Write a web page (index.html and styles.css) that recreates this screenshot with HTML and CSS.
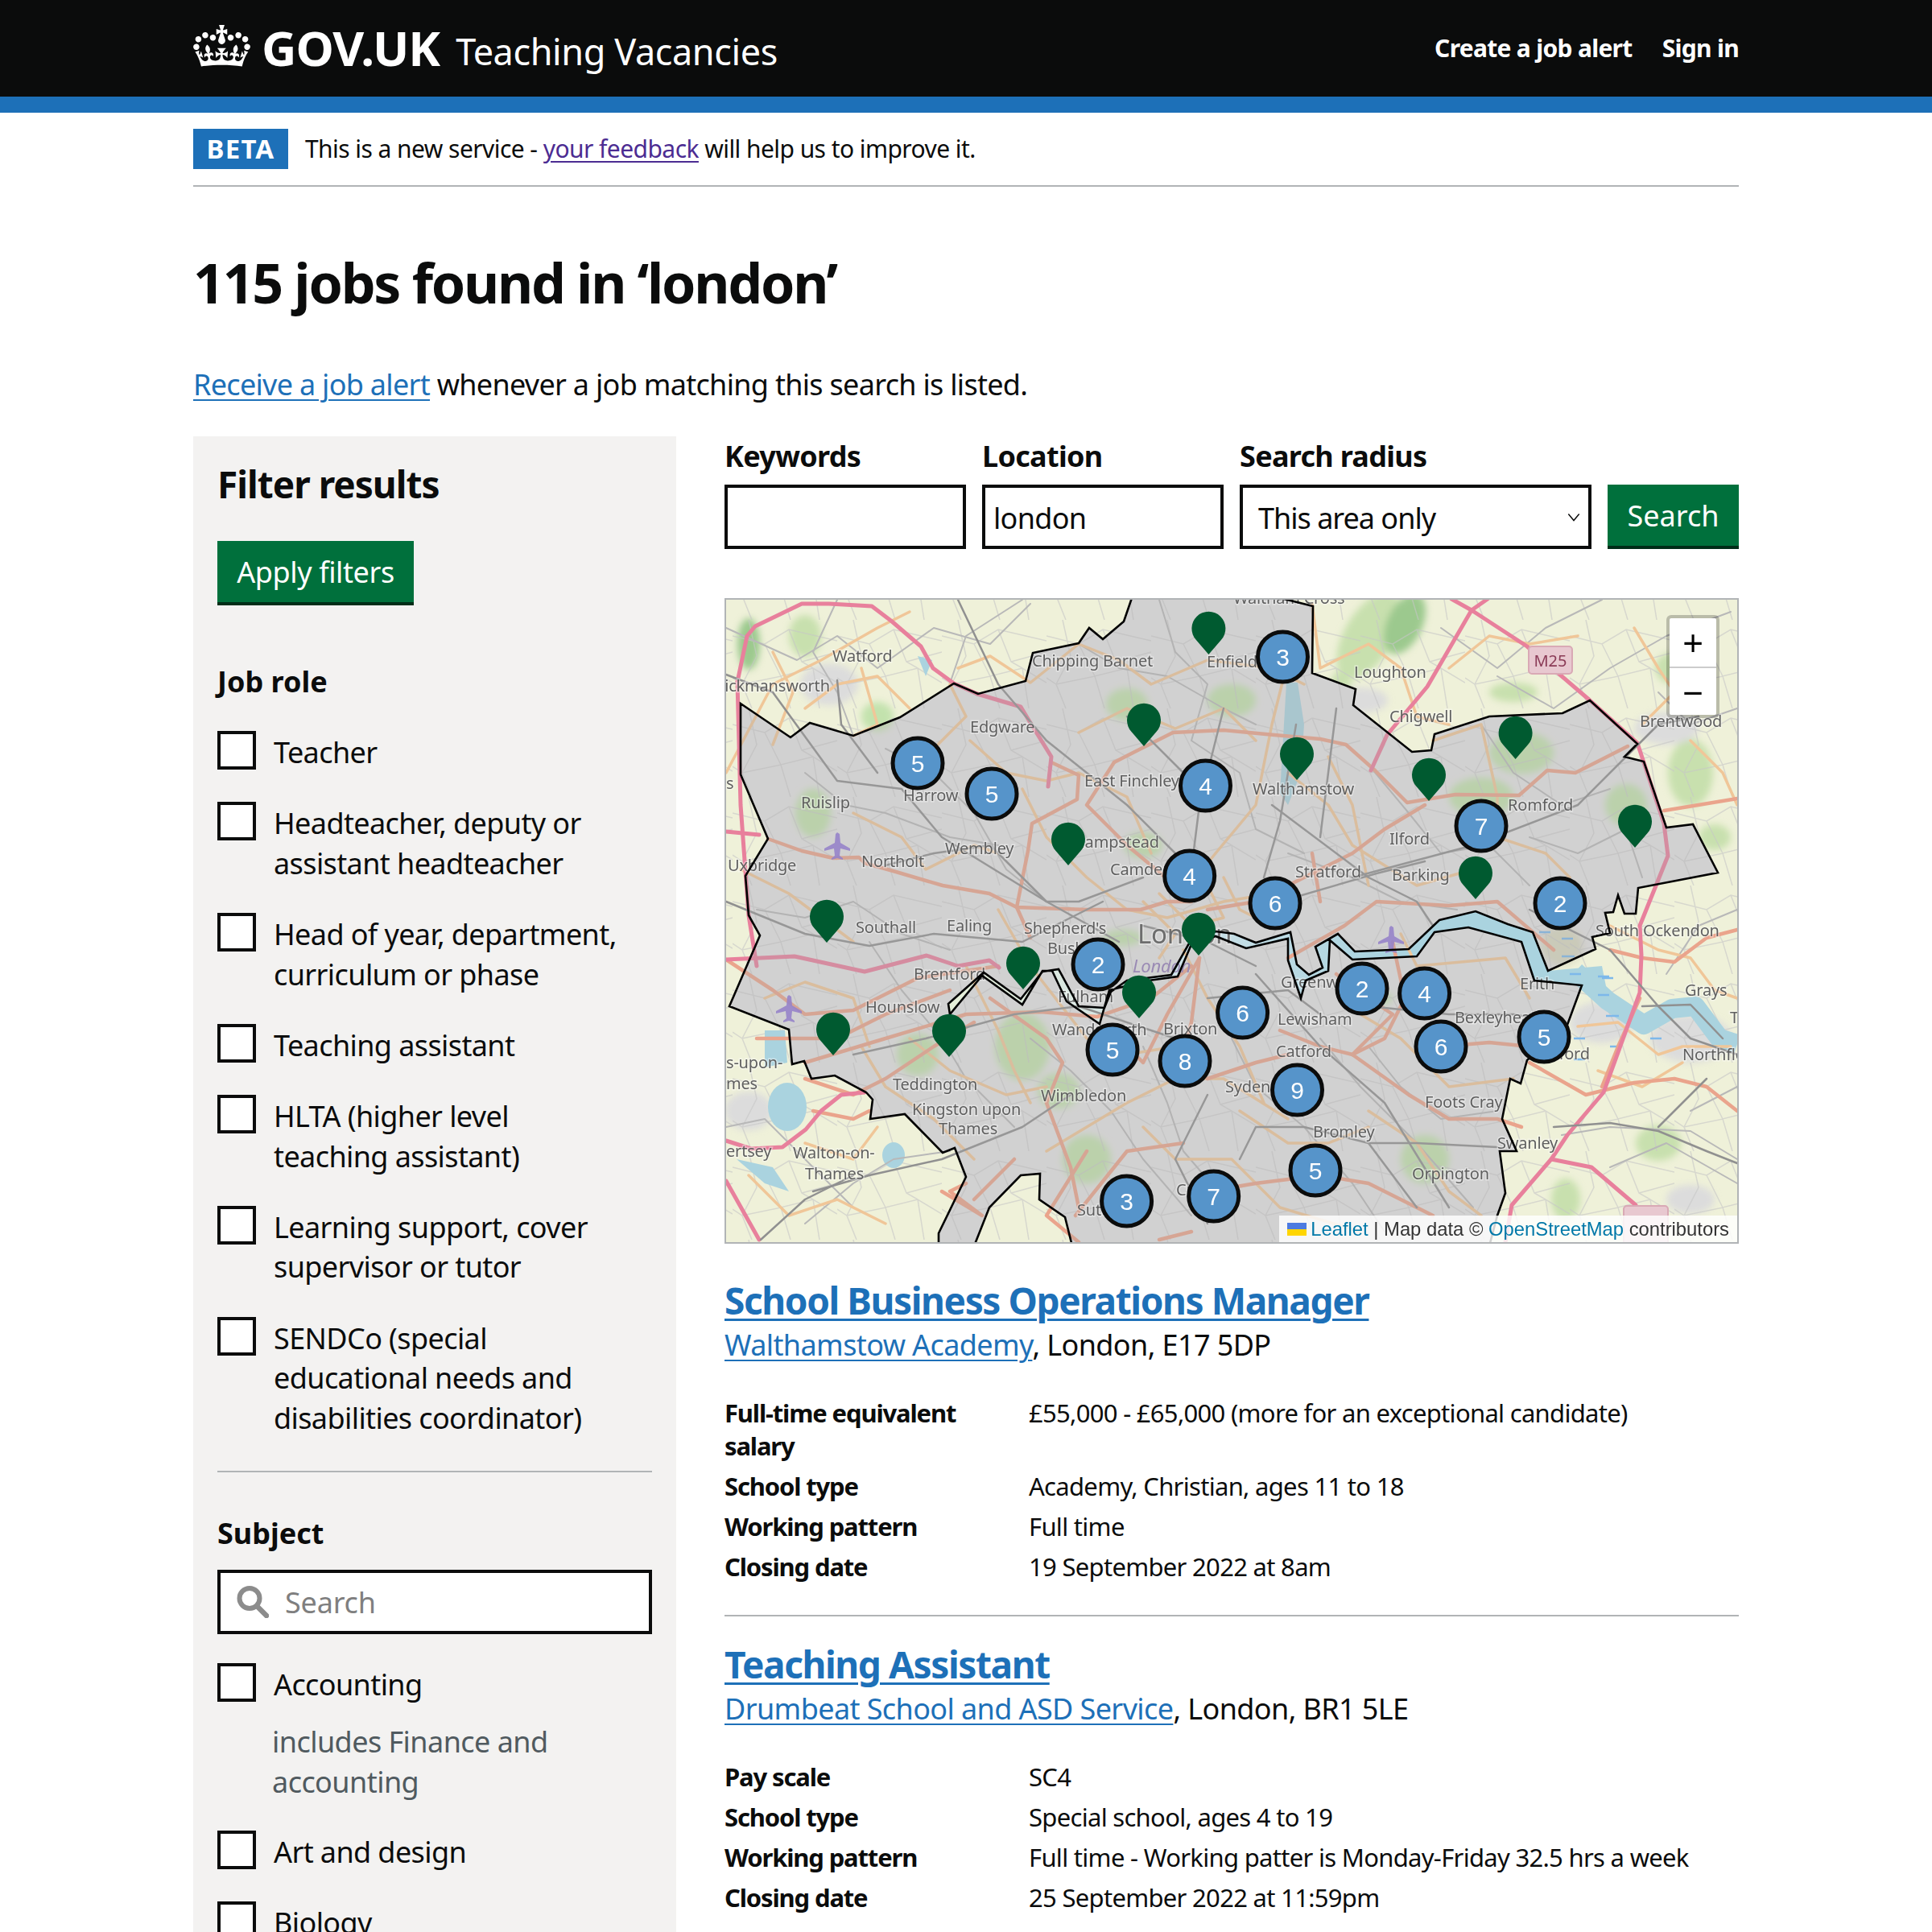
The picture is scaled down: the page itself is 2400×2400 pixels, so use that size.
FILE: index.html
```html
<!DOCTYPE html>
<html lang="en">
<head>
<meta charset="utf-8">
<title>Teaching Vacancies</title>
<link rel="stylesheet" href="styles.css">
</head>
<body>
<div class="page">
<header class="site-header">
  <div class="container header-row">
    <a class="logo">
      <svg class="crown" viewBox="0 0 132 97" aria-hidden="true"><path fill="#fff" fill-rule="evenodd" d="M25 30.2c3.5 1.5 7.7-.2 9.1-3.7 1.5-3.6-.2-7.8-3.9-9.2-3.6-1.4-7.6.3-9.1 3.9-1.4 3.5.3 7.5 3.9 9zM9 39.5c3.6 1.5 7.8-.2 9.2-3.7 1.5-3.6-.2-7.8-3.9-9.1-3.6-1.5-7.6.2-9.1 3.8-1.4 3.5.3 7.5 3.8 9zM4.4 57.2c3.5 1.5 7.7-.2 9.1-3.8 1.5-3.6-.2-7.7-3.9-9.1-3.5-1.5-7.6.3-9.1 3.8-1.4 3.5.3 7.6 3.9 9.1zm38.3-21.4c3.5 1.5 7.7-.2 9.1-3.8 1.5-3.6-.2-7.7-3.9-9.1-3.6-1.5-7.6.3-9.1 3.8-1.3 3.6.4 7.7 3.9 9.1zm64.4-5.6c-3.6 1.5-7.8-.2-9.1-3.7-1.5-3.6.2-7.8 3.8-9.2 3.6-1.4 7.7.3 9.2 3.9 1.3 3.5-.4 7.5-3.9 9zm15.9 9.3c-3.6 1.5-7.7-.2-9.1-3.7-1.5-3.6.2-7.8 3.7-9.1 3.6-1.5 7.7.2 9.2 3.8 1.5 3.5-.3 7.5-3.8 9zm4.7 17.7c-3.6 1.5-7.8-.2-9.2-3.8-1.5-3.6.2-7.7 3.9-9.1 3.6-1.5 7.7.3 9.2 3.8 1.3 3.5-.4 7.6-3.9 9.1zM89.3 35.8c-3.6 1.5-7.8-.2-9.2-3.8-1.4-3.6.2-7.7 3.9-9.1 3.6-1.5 7.7.3 9.2 3.8 1.4 3.6-.3 7.7-3.9 9.1zM69.7 17.7l8.9 4.7V9.3l-8.9 2.8c-.2-.3-.5-.6-.9-.9L72.4 0H59.6l3.5 11.2c-.3.3-.6.5-.9.9l-8.8-2.8v13.1l8.8-4.7c.3.3.6.7.9.9l-5 15.4v.1c-.2.8-.4 1.6-.4 2.4 0 4.1 3.1 7.5 7 8.1h.2c.3 0 .7.1 1 .1.4 0 .7 0 1-.1h.2c4-.6 7.1-4.1 7.1-8.1 0-.8-.1-1.7-.4-2.4V34l-5.1-15.4c.4-.2.7-.6 1-.9zM66 92.8c16.9 0 32.8 1.1 47.1 3.2 4-16.9 8.9-26.7 14-33.5l-9.6-3.4c1 4.9 1.1 7.2 0 10.2-1.5-1.4-3-4.3-4.2-8.7L108.6 76c2.8-2 5-3.2 7.5-3.3-4.4 9.4-10 11.9-13.6 11.2-4.3-.8-6.3-4.6-5.6-7.9 1-4.7 5.7-5.9 8-.5 4.3-8.7-3-11.4-7.6-8.8 7.1-7.2 7.9-13.5 2.1-21.1-8 6.1-8.1 12.3-4.5 20.8-4.7-5.4-12.1-2.5-9.5 6.2 3.4-5.2 7.9-2 7.2 3.1-.6 4.3-6.4 7.8-13.5 7.2-10.3-.9-10.9-8-11.2-13.8 2.5-.5 7.1 1.8 11 7.3L80.2 60c-4.1 4.4-8 5.3-12.3 5.4 1.4-4.4 8-11.6 8-11.6H55.5s6.4 7.2 7.9 11.6c-4.2-.1-8-1-12.3-5.4l1.4 16.4c3.9-5.5 8.5-7.7 10.9-7.3-.3 5.8-.9 12.8-11.1 13.8-7.2.6-12.9-2.9-13.5-7.2-.7-5 3.8-8.3 7.1-3.1 2.7-8.7-4.6-11.6-9.4-6.2 3.7-8.5 3.6-14.7-4.6-20.8-5.8 7.6-5 13.9 2.2 21.1-4.7-2.6-11.9.1-7.7 8.8 2.3-5.5 7.1-4.2 8.1.5.7 3.3-1.3 7.1-5.7 7.9-3.5.7-9-1.8-13.5-11.2 2.5.1 4.7 1.3 7.5 3.3l-4.7-15.4c-1.2 4.4-2.7 7.2-4.3 8.7-1.1-3-.9-5.3 0-10.2l-9.5 3.4c5 6.9 9.9 16.7 14 33.5 14.8-2.1 30.8-3.2 47.7-3.2z"/></svg>
      <span class="logo-govuk">GOV.UK</span>
      <span class="logo-service">Teaching Vacancies</span>
    </a>
    <nav class="header-nav"><a>Create a job alert</a><a>Sign in</a></nav>
  </div>
</header>

<div class="container">
  <div class="beta">
    <strong class="beta-tag">BETA</strong>
    <span class="beta-text">This is a new service - <a class="visited">your feedback</a> will help us to improve it.</span>
  </div>

  <h1 class="title">115 jobs found in ‘london’</h1>
  <p class="lead"><a class="link">Receive a job alert</a> whenever a job matching this search is listed.</p>

  <div class="columns">
    <aside class="filters">
      <h2 class="filters-title">Filter results</h2>
      <button class="btn btn-apply">Apply filters</button>

      <h3 class="group-title first">Job role</h3>
      <ul class="checks">
        <li class="check"><span class="box"></span><span class="check-label">Teacher</span></li>
        <li class="check"><span class="box"></span><span class="check-label">Headteacher, deputy or<br>assistant headteacher</span></li>
        <li class="check"><span class="box"></span><span class="check-label">Head of year, department,<br>curriculum or phase</span></li>
        <li class="check"><span class="box"></span><span class="check-label">Teaching assistant</span></li>
        <li class="check"><span class="box"></span><span class="check-label">HLTA (higher level<br>teaching assistant)</span></li>
        <li class="check"><span class="box"></span><span class="check-label">Learning support, cover<br>supervisor or tutor</span></li>
        <li class="check"><span class="box"></span><span class="check-label">SENDCo (special<br>educational needs and<br>disabilities coordinator)</span></li>
      </ul>
      <hr class="filter-rule">

      <h3 class="group-title subject">Subject</h3>
      <div class="subject-search">
        <svg class="search-icon" viewBox="0 0 40 40" aria-hidden="true"><circle cx="16" cy="15.5" r="12.5" fill="none" stroke="#8c8c8c" stroke-width="6"/><path d="M25 25l12 12" stroke="#8c8c8c" stroke-width="6.5" stroke-linecap="round"/></svg>
        <span class="search-placeholder">Search</span>
      </div>
      <ul class="checks">
        <li class="check-block">
          <div class="check"><span class="box"></span><span class="check-label">Accounting</span></div>
          <p class="hint">includes Finance and<br>accounting</p>
        </li>
        <li class="check"><span class="box"></span><span class="check-label">Art and design</span></li>
        <li class="check"><span class="box"></span><span class="check-label">Biology</span></li>
      </ul>
    </aside>

    <main class="results">
      <form class="search-form">
        <div class="field field-kw"><label class="field-label">Keywords</label><div class="input"></div></div>
        <div class="field field-loc"><label class="field-label">Location</label><div class="input">london</div></div>
        <div class="field field-rad"><label class="field-label">Search radius</label>
          <div class="input select">This area only<svg class="chev" viewBox="0 0 12 8" aria-hidden="true"><path d="M1 1l5 6 5-6" fill="none" stroke="#0b0c0c" stroke-width="1.1"/></svg></div>
        </div>
        <button class="btn btn-search" type="button">Search</button>
      </form>

      <div class="map">
        <svg class="map-svg" viewBox="902 745 1256 798" aria-label="Map of London">
          <defs>
            <filter id="soft" x="-2%" y="-2%" width="104%" height="104%"><feGaussianBlur stdDeviation="0.7"/></filter>
            <filter id="softer" x="-20%" y="-20%" width="140%" height="140%"><feGaussianBlur stdDeviation="4"/></filter>
            <linearGradient id="thames" gradientUnits="userSpaceOnUse" x1="1180" y1="0" x2="1720" y2="0">
              <stop offset="0" stop-color="#e6efd8"/><stop offset=".5" stop-color="#cfe2e8"/><stop offset="1" stop-color="#aad3df"/>
            </linearGradient>
            <pattern id="streets" width="130" height="110" patternUnits="userSpaceOnUse">
              <path class="street" d="M0 20L40 30L70 12L130 26M20 0L30 45L12 80L24 110M40 30L60 70L100 60L130 78M70 12L86 52L100 60L108 110M0 72L12 80L60 70L72 110M86 52L130 40"/>
            </pattern>
            <path id="gla" d="M920 874L982 916L1006 898L1060 914L1118 891L1185 849L1215 862L1274 846L1283 811L1340 799L1353 780L1370 794L1396 772L1407 740L1579 740L1631 753L1630 836L1684 856L1681 876L1754 934L1778 932L1782 912L1850 890L1941 886L1975 870L2034 924L2018 940L2042 946L2070 1028L2103 1024L2134 1084L2035 1103L2032 1135L2018 1135L2010 1112L2004 1133L1994 1134L2000 1159L1978 1164L1982 1179L1923 1206L1904 1158L1873 1148L1833 1132L1788 1143L1750 1179L1683 1182L1662 1160L1634 1176L1643 1202L1626 1211L1611 1198L1603 1158L1560 1171L1533 1160L1510 1157L1477 1172L1455 1211L1400 1218L1380 1232L1372 1252L1340 1250L1315 1204L1295 1207L1268 1241L1222 1208L1178 1247L1180 1260L1220 1212L1270 1248L1295 1206L1307 1206L1325 1244L1366 1272L1378 1230L1427 1218L1463 1213L1480 1173L1510 1163L1548 1178L1600 1166L1600 1193L1616 1240L1622 1218L1650 1206L1652 1168L1680 1192L1760 1188L1782 1158L1824 1152L1890 1170L1906 1218L1965 1224L1947 1273L1897 1317L1889 1346L1876 1340L1866 1390L1884 1430L1863 1430L1870 1482L1860 1510L1850 1548L1332 1548L1323 1512L1291 1490L1292 1458L1268 1460L1229 1500L1210 1548L1166 1548L1166 1532L1200 1462L1186 1426L1171 1432L1124 1384L1081 1390L1084 1366L1076 1357L1037 1336L1008 1340L999 1318L984 1322L980 1279L906 1250L944 1162L930 1137L926 1088L954 1042L920 962Z"/>
          </defs>

          <g filter="url(#soft)">
            <rect class="m-base" x="902" y="745" width="1256" height="798"/>
            <g filter="url(#softer)">
              <ellipse class="m-wood" cx="1700" cy="790" rx="30" ry="60" transform="rotate(30 1700 790)"/>
              <ellipse class="m-wood2" cx="1745" cy="775" rx="22" ry="40" transform="rotate(25 1745 775)"/>
              <ellipse class="m-wood" cx="1665" cy="860" rx="14" ry="26"/>
              <ellipse class="m-wood" cx="1000" cy="790" rx="20" ry="26"/>
              <ellipse class="m-wood2" cx="930" cy="800" rx="14" ry="32"/>
              <ellipse class="m-wood" cx="2100" cy="960" rx="28" ry="42"/>
              <ellipse class="m-wood" cx="2130" cy="1040" rx="20" ry="16"/>
              <ellipse class="m-wood" cx="2080" cy="830" rx="24" ry="20"/>
              <ellipse class="m-wood" cx="1880" cy="860" rx="30" ry="12"/>
              <ellipse class="m-wood" cx="1945" cy="1490" rx="18" ry="26"/>
              <ellipse class="m-wood" cx="2060" cy="1420" rx="28" ry="22"/>
              <ellipse class="m-urban" cx="1030" cy="850" rx="36" ry="26"/>
              <ellipse class="m-urban" cx="1690" cy="870" rx="34" ry="16"/>
              <ellipse class="m-urban" cx="1990" cy="1270" rx="40" ry="26"/>
              <ellipse class="m-urban" cx="2100" cy="1290" rx="50" ry="30"/>
              <ellipse class="m-urban" cx="2070" cy="905" rx="40" ry="20"/>
              <ellipse class="m-urban" cx="930" cy="1380" rx="30" ry="24"/>
              <ellipse class="m-urban" cx="2100" cy="1490" rx="30" ry="18"/>
            </g>
            <use href="#gla" class="m-urbanfill"/>
            <g filter="url(#softer)">
              <ellipse class="m-park" cx="1270" cy="1300" rx="34" ry="42"/>
              <ellipse class="m-park" cx="1315" cy="1355" rx="26" ry="22"/>
              <ellipse class="m-park" cx="1420" cy="1050" rx="24" ry="16"/>
              <ellipse class="m-park" cx="1395" cy="1165" rx="24" ry="10"/>
              <ellipse class="m-park" cx="1400" cy="875" rx="26" ry="20"/>
              <ellipse class="m-park" cx="1530" cy="870" rx="30" ry="20"/>
              <ellipse class="m-park" cx="1010" cy="1010" rx="22" ry="30"/>
              <ellipse class="m-park" cx="1090" cy="890" rx="20" ry="18"/>
              <ellipse class="m-park" cx="1840" cy="990" rx="40" ry="24"/>
              <ellipse class="m-park" cx="1890" cy="935" rx="40" ry="26"/>
              <ellipse class="m-park" cx="2020" cy="1000" rx="26" ry="26"/>
              <ellipse class="m-park" cx="1770" cy="1440" rx="30" ry="30"/>
              <ellipse class="m-park" cx="1350" cy="1440" rx="30" ry="30"/>
              <ellipse class="m-park" cx="1140" cy="1310" rx="26" ry="26"/>
              <ellipse class="m-park" cx="1700" cy="1240" rx="30" ry="10"/>
              <ellipse class="m-marsh" cx="1940" cy="1175" rx="26" ry="24"/>
            </g>
            <rect class="m-streets" x="902" y="745" width="1256" height="798" fill="url(#streets)"/>
            <g class="m-water">
              <path d="M1598 848L1612 848L1620 900L1616 960L1600 1000L1590 985Z"/>
              <path d="M1140 815L1158 820L1150 840Z"/>
              <path d="M950 1280L975 1280L978 1320L950 1326Z"/>
              <ellipse cx="978" cy="1375" rx="24" ry="30"/>
              <ellipse cx="1110" cy="1435" rx="14" ry="16"/>
              <path d="M915 1440L960 1450L980 1480L950 1470Z"/>
            </g>
            <path class="thames-outer" d="M1957 1207L1997 1243L2042 1273L2077 1253L2106 1250L2136 1290L2158 1297"/>
            <path class="thames-fill" d="M1178 1247L1222 1208L1268 1241L1295 1207L1315 1204L1340 1250L1372 1252L1380 1232L1400 1218L1455 1211L1477 1172L1510 1157L1533 1160L1560 1171L1603 1158L1611 1198L1626 1211L1643 1202L1634 1176L1662 1160L1683 1182L1750 1179L1788 1143L1833 1132L1873 1148L1904 1158L1923 1206L1990 1200L2000 1250L1965 1224L1906 1218L1890 1170L1824 1152L1782 1158L1760 1188L1680 1192L1652 1168L1650 1206L1622 1218L1616 1240L1600 1193L1600 1166L1548 1178L1510 1163L1480 1173L1463 1213L1427 1218L1378 1230L1366 1272L1325 1244L1307 1206L1295 1206L1270 1248L1220 1212L1180 1260Z"/>
            <path class="m-dash" d="M1912 1158h14M1940 1166h14M1940 1188h16M1950 1210h14M1985 1213h14M1985 1236h14M1995 1262h16M1955 1290h14M1955 1316h14M1990 1215h14M2000 1300h14M2050 1290h14"/>

            <g class="r-minor">
              <path d="M902 780L990 820L1040 790L1090 830L1160 780L1230 800L1280 750"/>
              <path d="M1060 914L1040 860L1010 810L1040 745"/>
              <path d="M1180 849L1200 790L1270 745"/>
              <path d="M1790 780L1860 830L1920 780L1990 745"/>
              <path d="M1860 840L1930 880L2000 830L2070 790L2150 760"/>
              <path d="M2060 860L2100 900L2158 880"/>
              <path d="M2000 1450L2070 1420L2158 1470"/>
              <path d="M1940 1410L2000 1400L2100 1405L2158 1440"/>
              <path d="M2100 1380L2158 1350"/>
              <path d="M2070 1210L2110 1150L2158 1130"/>
              <path d="M902 1400L950 1390L1000 1440L1060 1500"/>
              <path d="M1000 1520L1060 1470L1110 1440L1180 1430"/>
              <path d="M1440 745L1460 810L1500 850L1480 920L1540 960L1560 1030L1620 1060"/>
              <path d="M1340 800L1390 830L1450 840L1520 880L1560 900"/>
              <path d="M1100 930L1160 960L1210 1010L1250 1080L1300 1120"/>
              <path d="M1000 960L1050 1000L1100 1010L1180 1040L1240 1050"/>
              <path d="M940 1130L1000 1140L1060 1120L1120 1160L1180 1180"/>
              <path d="M1080 1170L1120 1230L1170 1290L1200 1340L1260 1400"/>
              <path d="M1280 1290L1330 1330L1380 1380L1420 1440L1480 1510"/>
              <path d="M1420 1300L1450 1370L1470 1430L1530 1500"/>
              <path d="M1530 1290L1560 1350L1620 1400L1680 1470L1720 1530"/>
              <path d="M1640 1290L1690 1350L1760 1420L1830 1500"/>
              <path d="M1700 1300L1740 1350L1790 1390L1860 1380"/>
              <path d="M1600 1060L1680 1090L1740 1120L1810 1130"/>
              <path d="M1700 950L1750 1010L1790 1060L1850 1050L1900 1100"/>
              <path d="M1900 1040L1960 1060L2020 1030L2040 1090"/>
              <path d="M1840 900L1880 960L1940 1000L2000 980"/>
            </g>
            <g class="r-tan">
              <path d="M902 960L960 850L1020 820L1090 780L1130 760"/>
              <path d="M1000 880L1040 850L1090 840L1130 880"/>
              <path d="M960 925L985 860L960 810"/>
              <path d="M1070 830L1090 900L1060 914"/>
              <path d="M1190 830L1230 815L1280 848L1340 800L1390 820L1430 850L1500 820L1580 830L1620 850"/>
              <path d="M1180 850L1200 890L1160 930L1125 950"/>
              <path d="M1205 920L1250 960L1300 970L1340 960L1400 990L1430 1060"/>
              <path d="M1060 1010L1120 1040L1150 1080L1210 1050L1240 1060"/>
              <path d="M1270 980L1300 1040L1350 1090L1400 1130L1450 1140L1520 1120L1580 1110"/>
              <path d="M1340 910L1400 880L1460 905L1520 880L1560 920"/>
              <path d="M1600 820L1580 900L1560 1000L1510 1060L1470 1110"/>
              <path d="M1600 960L1650 1000L1680 1050L1760 1100L1830 1080"/>
              <path d="M1650 940L1680 1000L1700 1100"/>
              <path d="M1630 750L1640 830L1700 800L1740 830L1760 890L1800 900"/>
              <path d="M1780 920L1840 900L1860 990L1860 1040L1920 1060L1950 1090"/>
              <path d="M1800 830L1850 790L1900 800L1960 790"/>
              <path d="M2030 780L2060 830L2080 860L2040 900"/>
              <path d="M2100 920L2140 960L2158 1000"/>
              <path d="M2000 1150L2060 1180L2100 1190L2130 1230L2158 1240"/>
              <path d="M1960 1275L2010 1270L2060 1310L2090 1300L2150 1300"/>
              <path d="M1985 1330L2040 1350L2090 1320"/>
              <path d="M1690 1260L1740 1290L1800 1350L1880 1340"/>
              <path d="M1740 1160L1760 1200L1870 1190L1900 1240"/>
              <path d="M1700 1380L1760 1420L1800 1480L1840 1510"/>
              <path d="M1540 1380L1600 1420L1650 1420L1700 1400"/>
              <path d="M1300 1430L1400 1370L1460 1340L1520 1340L1600 1390"/>
              <path d="M1130 1290L1180 1330L1250 1360L1300 1350"/>
              <path d="M1200 1200L1240 1280L1260 1330L1280 1370"/>
              <path d="M1070 1300L1100 1350L1160 1390L1210 1440"/>
              <path d="M950 1240L1000 1220L1060 1240L1080 1300"/>
              <path d="M920 1080L980 1110L1020 1140L1060 1170"/>
              <path d="M930 1460L980 1510L1040 1490L1100 1520"/>
              <path d="M1000 1420L1060 1440L1090 1400"/>
              <path d="M1420 1400L1460 1440L1530 1440L1590 1500L1690 1530"/>
              <path d="M1240 1130L1280 1200L1350 1290L1400 1310L1460 1300"/>
              <path d="M1470 1180L1500 1240L1540 1300L1570 1370"/>
              <path d="M1440 1110L1480 1150L1520 1140L1500 1100M1420 1120L1460 1160L1440 1190M1520 1090L1540 1130L1580 1150"/>
            </g>
            <g class="r-salmon">
              <path d="M954 1042L996 1057L1035 1066L1067 1065L1074 1072L1113 1083L1171 1100L1229 1110L1263 1127L1350 1130L1417 1130L1450 1120L1480 1120"/>
              <path d="M1384 947L1457 910L1520 907L1583 913L1640 918L1672 925L1708 957L1748 997L1808 987L1887 988L1922 957L1957 960L2022 927"/>
              <path d="M2067 1007L2158 992"/>
              <path d="M1306 947L1340 963L1338 993L1282 1023L1277 1057L1263 1127L1280 1165"/>
              <path d="M1384 947L1350 1000L1400 1050L1460 1100"/>
              <path d="M902 1192L960 1230L1000 1260L1060 1255L1140 1215L1240 1200"/>
              <path d="M940 1290L1040 1290L1100 1260L1180 1230"/>
              <path d="M1000 1320L1100 1290L1200 1260L1293 1257L1363 1263L1430 1240L1480 1200"/>
              <path d="M1230 1240L1300 1290L1320 1320L1300 1370L1330 1450L1340 1500"/>
              <path d="M1490 1190L1450 1260L1420 1320L1400 1300"/>
              <path d="M1490 1190L1480 1270L1460 1340"/>
              <path d="M1500 1130L1560 1120L1620 1090L1680 1060L1720 1030L1770 1000"/>
              <path d="M1600 1190L1670 1150L1710 1120L1800 1125L1860 1120L1930 1180"/>
              <path d="M1660 1210L1700 1240L1730 1260L1680 1310L1640 1300L1590 1280"/>
              <path d="M1730 1170L1745 1240L1720 1290L1680 1310"/>
              <path d="M1680 1310L1750 1360L1800 1390L1860 1390L1890 1400"/>
              <path d="M1790 1300L1850 1295L1900 1300"/>
              <path d="M1500 1480L1560 1470L1640 1460L1700 1470L1780 1510"/>
              <path d="M1336 1510L1400 1430L1470 1420"/>
              <path d="M1500 1340L1560 1320L1600 1310"/>
              <path d="M1900 1320L1970 1360L2030 1345L2080 1340L2120 1350L2158 1380"/>
              <path d="M2000 1180L2040 1190L2080 1195L2120 1165L2158 1155"/>
              <path d="M2037 1240L2010 1300L1990 1350"/>
              <path d="M1000 1340L1060 1360L1100 1340L1160 1300L1210 1270"/>
              <path d="M1080 1380L1060 1390L1010 1380"/>
              <path d="M1260 1440L1210 1490"/>
              <path d="M1200 1470L1180 1480L1220 1510L1170 1480"/>
              <path d="M1350 1430L1300 1510L1340 1543"/>
              <path d="M1480 1530L1440 1540M1630 1060L1640 1120"/>
            </g>
            <g class="r-pink">
              <path d="M916 847L928 790L938 778L996 750L1030 750L1083 753L1108 772L1144 803L1159 830L1185 849L1214 862"/>
              <path d="M1214 862L1268 878L1277 893L1306 940L1302 977"/>
              <path d="M1803 744L1828 758L1848 744M1828 758L1773 853L1723 913L1703 957"/>
              <path d="M1828 758L1897 803L1975 870L2034 923L2067 1023L2072 1063L2037 1150L2039 1187L2037 1233L1992 1357L1947 1410L1927 1440L1878 1497L1870 1543"/>
              <path d="M1927 1440L1977 1450L2032 1497"/>
              <path d="M902 1192L987 1188L1074 1207L1151 1187L1190 1200L1229 1193L1241 1202"/>
              <path d="M902 1033L943 1037"/>
              <path d="M902 1417L933 1427L972 1425L1001 1403L1020 1380L1045 1360L1074 1357"/>
              <path d="M902 1467L943 1540"/>
              <path d="M916 847L920 1000L930 1137L940 1200"/>
            </g>
            <g class="r-rail">
              <path d="M902 838L960 860L1040 970L1120 980L1170 1040L1300 1120L1390 1170"/>
              <path d="M1040 845L1045 900L1090 960"/>
              <path d="M1190 745L1240 850L1300 920L1400 1000L1470 1070"/>
              <path d="M1100 1075L1160 1060L1230 1050L1300 1120L1340 1120L1420 1090"/>
              <path d="M902 1120L1000 1160L1080 1175L1160 1160L1270 1170L1370 1120"/>
              <path d="M1400 890L1470 960L1490 985"/>
              <path d="M1520 880L1490 1000L1480 1080"/>
              <path d="M1610 900L1590 1020L1570 1090"/>
              <path d="M1660 880L1650 960L1640 1040"/>
              <path d="M1580 1000L1700 1090L1760 1120L1780 1150"/>
              <path d="M1680 1090L1830 1050L1960 1000L2020 940L2060 900L2110 890"/>
              <path d="M1590 1120L1710 1085L1770 1070"/>
              <path d="M1900 1130L2000 1180L2060 1250L2100 1290L2158 1310"/>
              <path d="M2040 1250L2100 1248L2140 1290"/>
              <path d="M1060 1310L1150 1290L1260 1260L1340 1250L1460 1290"/>
              <path d="M1010 1480L1080 1460L1170 1440L1270 1400L1330 1360"/>
              <path d="M945 1540L1000 1490L1060 1460"/>
              <path d="M1700 1250L1800 1260L1880 1260L1940 1270"/>
              <path d="M1500 1240L1600 1230L1640 1260"/>
              <path d="M1560 1210L1640 1300L1720 1370L1800 1500"/>
              <path d="M1500 1360L1460 1440L1500 1520"/>
              <path d="M1540 1440L1560 1400L1620 1400L1700 1420L1760 1420L1860 1425"/>
              <path d="M1930 1400L2000 1395L2060 1405L2120 1430L2158 1445"/>
              <path d="M2120 1340L2080 1380L2060 1400"/>
              <path d="M1700 1420L1760 1500"/>
              <path d="M1560 1200L1500 1170L1420 1150"/>
            </g>
            <use href="#gla" class="m-overlay"/>
            <g class="m-plane">
              <path transform="translate(1040 1052)" d="M0-18l3 2 1 11 12 7v3L4 2 3 11l4 3v2l-7-2-7 2v-2l4-3-1-9-12 3V2L-3-5-2-16Z"/>
              <path transform="translate(980 1254)" d="M0-18l3 2 1 11 12 7v3L4 2 3 11l4 3v2l-7-2-7 2v-2l4-3-1-9-12 3V2L-3-5-2-16Z"/>
              <path transform="translate(1728 1168)" d="M0-18l3 2 1 11 12 7v3L4 2 3 11l4 3v2l-7-2-7 2v-2l4-3-1-9-12 3V2L-3-5-2-16Z"/>
            </g>
            <g class="lbl">
              <text x="1532" y="750">Waltham Cross</text>
              <text x="1034" y="822">Watford</text>
              <text x="888" y="859">Rickmansworth</text>
              <text x="1282" y="828">Chipping Barnet</text>
              <text x="1499" y="829">Enfield</text>
              <text x="1682" y="842">Loughton</text>
              <text x="1726" y="897">Chigwell</text>
              <text x="2037" y="903">Brentwood</text>
              <text x="1205" y="910">Edgware</text>
              <text x="1347" y="977">East Finchley</text>
              <text x="1556" y="987">Walthamstow</text>
              <text x="1122" y="995">Harrow</text>
              <text x="995" y="1004">Ruislip</text>
              <text x="1873" y="1007">Romford</text>
              <text x="902" y="980">s</text>
              <text x="1174" y="1061">Wembley</text>
              <text x="1070" y="1077">Northolt</text>
              <text x="904" y="1082">Uxbridge</text>
              <text x="1333" y="1053">Hampstead</text>
              <text x="1379" y="1087">Camden</text>
              <text x="1609" y="1090">Stratford</text>
              <text x="1726" y="1049">Ilford</text>
              <text x="1729" y="1094">Barking</text>
              <text x="1063" y="1159">Southall</text>
              <text x="1176" y="1157">Ealing</text>
              <text x="1272" y="1160">Shepherd's</text>
              <text x="1301" y="1185">Bush</text>
              <text x="1135" y="1217">Brentford</text>
              <text x="1075" y="1258">Hounslow</text>
              <text x="1314" y="1245">Fulham</text>
              <text x="1307" y="1286">Wandsworth</text>
              <text x="1445" y="1285">Brixton</text>
              <text x="1109" y="1354">Teddington</text>
              <text x="1133" y="1385">Kingston upon</text>
              <text x="1166" y="1409">Thames</text>
              <text x="1293" y="1368">Wimbledon</text>
              <text x="902" y="1327">s-upon-</text>
              <text x="902" y="1353">mes</text>
              <text x="902" y="1437">ertsey</text>
              <text x="985" y="1439">Walton-on-</text>
              <text x="1000" y="1465">Thames</text>
              <text x="1338" y="1510">Sutton</text>
              <text x="1587" y="1273">Lewisham</text>
              <text x="1591" y="1227">Greenwich</text>
              <text x="1585" y="1313">Catford</text>
              <text x="1522" y="1357">Sydenham</text>
              <text x="1631" y="1413">Bromley</text>
              <text x="1770" y="1376">Foots Cray</text>
              <text x="1754" y="1465">Orpington</text>
              <text x="1860" y="1427">Swanley</text>
              <text x="1807" y="1271">Bexleyheath</text>
              <text x="1888" y="1229">Erith</text>
              <text x="1896" y="1316">Dartford</text>
              <text x="2093" y="1237">Grays</text>
              <text x="2090" y="1317">Northfleet</text>
              <text x="1982" y="1163">South Ockendon</text>
              <text x="2149" y="1271">Tilbury</text>
              <text x="1461" y="1485">Croydon</text>
              <text class="lbl-big" x="1413" y="1172">London</text>
              <text class="lbl-boro" x="1407" y="1208">London</text>
            </g>
            <g>
              <rect class="shield" x="1899" y="803" width="54" height="34" rx="4"/>
              <text class="shield-text" x="1926" y="828">M25</text>
              <rect class="shield" x="2017" y="1498" width="55" height="50" rx="4"/>
            </g>
          </g>
          <use href="#gla" class="m-border"/>

          <g class="pins">
            <path transform="translate(1480.4 760)" d="M21 53L5.5 35A21 21 0 1 1 36.500 35Z"/>
            <path transform="translate(1400 874)" d="M21 53L5.5 35A21 21 0 1 1 36.500 35Z"/>
            <path transform="translate(1306 1022)" d="M21 53L5.5 35A21 21 0 1 1 36.500 35Z"/>
            <path transform="translate(1590 916)" d="M21 53L5.5 35A21 21 0 1 1 36.500 35Z"/>
            <path transform="translate(1006 1118)" d="M21 53L5.5 35A21 21 0 1 1 36.500 35Z"/>
            <path transform="translate(1861.600 890)" d="M21 53L5.5 35A21 21 0 1 1 36.500 35Z"/>
            <path transform="translate(1754 942)" d="M21 53L5.5 35A21 21 0 1 1 36.500 35Z"/>
            <path transform="translate(2010 1000)" d="M21 53L5.5 35A21 21 0 1 1 36.500 35Z"/>
            <path transform="translate(1812 1064)" d="M21 53L5.5 35A21 21 0 1 1 36.500 35Z"/>
            <path transform="translate(1250 1176)" d="M21 53L5.5 35A21 21 0 1 1 36.500 35Z"/>
            <path transform="translate(1468 1134)" d="M21 53L5.5 35A21 21 0 1 1 36.500 35Z"/>
            <path transform="translate(1394 1212)" d="M21 53L5.5 35A21 21 0 1 1 36.500 35Z"/>
            <path transform="translate(1014 1258)" d="M21 53L5.5 35A21 21 0 1 1 36.500 35Z"/>
            <path transform="translate(1158 1260)" d="M21 53L5.5 35A21 21 0 1 1 36.500 35Z"/>
          </g>

          <g class="clusters">
            <g transform="translate(1593.500 816)"><circle r="31"/><text y="10.500">3</text></g>
            <g transform="translate(1140 948)"><circle r="31"/><text y="10.500">5</text></g>
            <g transform="translate(1232 986)"><circle r="31"/><text y="10.500">5</text></g>
            <g transform="translate(1497.500 976)"><circle r="31"/><text y="10.500">4</text></g>
            <g transform="translate(1840 1026)"><circle r="31"/><text y="10.500">7</text></g>
            <g transform="translate(1477.700 1088)"><circle r="31"/><text y="10.500">4</text></g>
            <g transform="translate(1584 1122)"><circle r="31"/><text y="10.500">6</text></g>
            <g transform="translate(1938 1122)"><circle r="31"/><text y="10.500">2</text></g>
            <g transform="translate(1364 1198)"><circle r="31"/><text y="10.500">2</text></g>
            <g transform="translate(1692 1228)"><circle r="31"/><text y="10.500">2</text></g>
            <g transform="translate(1769.600 1234)"><circle r="31"/><text y="10.500">4</text></g>
            <g transform="translate(1543.600 1258)"><circle r="31"/><text y="10.500">6</text></g>
            <g transform="translate(1790 1300)"><circle r="31"/><text y="10.500">6</text></g>
            <g transform="translate(1918 1288)"><circle r="31"/><text y="10.500">5</text></g>
            <g transform="translate(1382 1304)"><circle r="31"/><text y="10.500">5</text></g>
            <g transform="translate(1472 1318)"><circle r="31"/><text y="10.500">8</text></g>
            <g transform="translate(1611.500 1354)"><circle r="31"/><text y="10.500">9</text></g>
            <g transform="translate(1634 1454)"><circle r="31"/><text y="10.500">5</text></g>
            <g transform="translate(1507.700 1486)"><circle r="31"/><text y="10.500">7</text></g>
            <g transform="translate(1399.600 1492)"><circle r="31"/><text y="10.500">3</text></g>
          </g>
        </svg>
        <div class="zoom-ctl"><span class="zoom-btn">+</span><span class="zoom-btn">−</span></div>
        <div class="attrib"><svg class="flag" viewBox="0 0 12 8" aria-hidden="true"><rect width="12" height="4" fill="#4c7be1"/><rect y="4" width="12" height="4" fill="#ffd500"/></svg><a class="attrib-link">Leaflet</a> | Map data © <a class="attrib-link">OpenStreetMap</a> contributors</div>
      </div>

      <article class="job">
        <h2 class="job-title"><a>School Business Operations Manager</a></h2>
        <p class="job-org"><a class="link">Walthamstow Academy</a>, London, E17 5DP</p>
        <dl class="job-meta">
          <div class="meta-row"><dt>Full-time equivalent salary</dt><dd>£55,000 - £65,000 (more for an exceptional candidate)</dd></div>
          <div class="meta-row"><dt>School type</dt><dd>Academy, Christian, ages 11 to 18</dd></div>
          <div class="meta-row"><dt>Working pattern</dt><dd>Full time</dd></div>
          <div class="meta-row"><dt>Closing date</dt><dd>19 September 2022 at 8am</dd></div>
        </dl>
      </article>
      <hr class="job-rule">
      <article class="job">
        <h2 class="job-title"><a>Teaching Assistant</a></h2>
        <p class="job-org"><a class="link">Drumbeat School and ASD Service</a>, London, BR1 5LE</p>
        <dl class="job-meta">
          <div class="meta-row"><dt>Pay scale</dt><dd>SC4</dd></div>
          <div class="meta-row"><dt>School type</dt><dd>Special school, ages 4 to 19</dd></div>
          <div class="meta-row"><dt>Working pattern</dt><dd>Full time - Working patter is Monday-Friday 32.5 hrs a week</dd></div>
          <div class="meta-row"><dt>Closing date</dt><dd>25 September 2022 at 11:59pm</dd></div>
        </dl>
      </article>
    </main>
  </div>
</div>
</div>
</body>
</html>
```
FILE: styles.css
```css
* { box-sizing: border-box; }
html, body { margin: 0; padding: 0; background: #fff; }
body { font-family: "Noto Sans", "Liberation Sans", sans-serif; color: #0b0c0c; }
a { color: inherit; }
.page { height: 2400px; overflow: hidden; }
.container { width: 1920px; margin: 0 auto; }

.site-header { height: 140px; background: #0b0c0c; border-bottom: 20px solid #1d70b8; color: #fff; }
.header-row { display: flex; align-items: center; justify-content: space-between; height: 120px; }
.logo { display: flex; align-items: center; }
.crown { width: 71px; height: 52px; margin-top: -6px; }
.logo-govuk { font-size: 60px; font-weight: 700; margin-left: 14px; letter-spacing: -1px; line-height: 60px; margin-top: -2px; }
.logo-service { font-size: 45px; margin-left: 20px; letter-spacing: -.4px; line-height: 60px; margin-top: 7px; }
.header-nav { display: flex; gap: 37px; font-size: 30px; font-weight: 700; letter-spacing: -.7px; margin-top: -2px; }

.beta { display: flex; align-items: center; gap: 21px; padding: 20px 0; border-bottom: 2px solid #b1b4b6; }
.beta-tag { width: 118px; height: 50px; background: #1d70b8; color: #fff; font-size: 33px; line-height: 50px; text-align: center; letter-spacing: 1.2px; }
.beta-text { font-size: 30px; letter-spacing: -.56px; line-height: 50px; }
.visited { color: #4c2c92; text-decoration: underline; text-underline-offset: 4px; text-decoration-thickness: 2px; }
.link { color: #1d70b8; text-decoration: underline; text-underline-offset: 5px; text-decoration-thickness: 2px; }

.title { margin: 79px 0 0; font-size: 68px; line-height: 80px; font-weight: 700; letter-spacing: -2.25px; }
.lead { margin: 62px 0 39px; font-size: 36px; line-height: 50px; letter-spacing: -.7px; }

.columns { display: flex; gap: 60px; align-items: flex-start; }
.filters { width: 600px; height: 1900px; padding: 30px; background: #f3f2f1; flex: none; }
.filters-title { margin: 0 0 42px; font-size: 46px; line-height: 58px; font-weight: 700; letter-spacing: -1px; }
.btn { display: block; height: 80px; border: 0; border-bottom: 4px solid #002d18; background: #00703c; color: #fff; font: 36px/78px "Noto Sans", sans-serif; padding: 0; text-align: center; }
.btn-apply { width: 244px; letter-spacing: -.4px; }
.btn-search { width: 163px; flex: none; }
.group-title { margin: 0; font-size: 36px; line-height: 50px; font-weight: 700; }
.group-title.first { margin-top: 70px; }
.group-title.subject { margin-top: 51px; }
.checks { list-style: none; margin: 36px 0 0; padding: 0; }
.check { display: flex; gap: 22px; margin-bottom: 36.800px; }
.check-block .check { margin-bottom: 21px; }
.check-block { margin-bottom: 35px; }
.box { width: 48px; height: 48px; border: 4px solid #0b0c0c; background: #fff; flex: none; }
.check-label { padding-top: 2px; font-size: 36px; line-height: 49.500px; letter-spacing: -.6px; white-space: nowrap; }
.hint { margin: 0 0 0 68px; color: #505a5f; font-size: 36px; line-height: 50px; letter-spacing: -.55px; }
.filter-rule { margin: 41px 0 0; border: 0; height: 2px; background: #b1b4b6; }
.subject-search { display: flex; align-items: center; margin-top: 20px; height: 80px; border: 4px solid #0b0c0c; background: #fff; padding-left: 20px; }
.search-icon { width: 40px; height: 40px; }
.search-placeholder { margin-left: 20px; font-size: 36px; color: #7f7f7f; letter-spacing: -.2px; }

.results { width: 1260px; flex: none; }
.search-form { display: flex; gap: 20px; align-items: flex-end; }
.field-label { display: block; margin-bottom: 10px; font-size: 36px; line-height: 50px; font-weight: 700; letter-spacing: -.7px; }
.field-kw, .field-loc { width: 300px; }
.field-rad { width: 437px; }
.input { display: flex; align-items: center; height: 80px; border: 4px solid #0b0c0c; background: #fff; padding: 2px 0 0 10px; font-size: 36px; letter-spacing: -.7px; }
.select { position: relative; padding-left: 19px; letter-spacing: -1px; }
.chev { position: absolute; right: 10px; top: 31px; width: 16px; height: 11px; }

.map { position: relative; margin-top: 61px; height: 802px; border: 2px solid #b1b4b6; overflow: hidden; }
.map-svg { display: block; width: 1256px; height: 798px; }
.m-base { fill: #eff1d9; }
.m-wood { fill: #c8e0ae; }
.m-wood2 { fill: #9cc98e; }
.m-urban { fill: #dcdcdc; }
.m-park { fill: #c3e2ad; }
.m-marsh { fill: #d8d8c0; }
.m-urbanfill { fill: #e3e2e2; }
.m-overlay { fill: #a8a8a8; fill-opacity: .3; stroke: none; }
.m-border { fill: none; stroke: #000; stroke-width: 2.600; stroke-linejoin: miter; }
.m-streets { opacity: .6; }
.street { fill: none; stroke: #c6c6c6; stroke-width: 1.500; }
.m-water { fill: #aad3df; }
.m-dash { fill: none; stroke: #7db8ea; stroke-width: 2.500; }
.thames-outer { fill: none; stroke: #aad3df; stroke-width: 24; stroke-linejoin: round; }
.thames-fill { fill: url(#thames); }
.r-minor path, .r-tan path, .r-salmon path, .r-pink path, .r-rail path { fill: none; stroke-linejoin: round; stroke-linecap: round; }
.r-minor path { stroke: #b8b8b8; stroke-width: 2; }
.r-tan path { stroke: #f0c698; stroke-width: 3.500; }
.r-salmon path { stroke: #eaa48c; stroke-width: 4.500; }
.r-pink path { stroke: #e8809c; stroke-width: 5; }
.r-rail path { stroke: #909090; stroke-width: 2.500; }
.m-plane { fill: #9683c9; opacity: .9; }
.lbl text { font-family: "Noto Sans", sans-serif; font-size: 20px; fill: #5f5f5f; stroke: #fff; stroke-opacity: .4; stroke-width: 3px; paint-order: stroke; letter-spacing: -.2px; }
.lbl .lbl-big { font-size: 33px; fill: #6d6d6d; }
.lbl .lbl-boro { font-size: 22px; font-style: italic; fill: #9a8ab4; stroke: none; }
.shield { fill: #e8c8d0; stroke: #d9a9b5; stroke-width: 2; }
.shield-text { font-family: "Noto Sans", sans-serif; font-size: 20px; fill: #8a3a56; text-anchor: middle; }
.pins path { fill: #005a30; }
.clusters circle { fill: #5694ca; stroke: #0b0c0c; stroke-width: 5; }
.clusters text { fill: #fff; font: 30px "Liberation Sans", sans-serif; text-anchor: middle; }
.zoom-ctl { position: absolute; top: 19px; right: 22px; width: 66px; border: 4px solid rgba(0,0,0,.22); border-radius: 6px; background: #fff; background-clip: padding-box; }
.zoom-btn { display: block; height: 60px; padding-top: 1px; font: 44px/60px "Liberation Sans", sans-serif; text-align: center; color: #000; }
.zoom-btn + .zoom-btn { border-top: 2px solid #ccc; }
.attrib { position: absolute; right: 0; bottom: 0; display: flex; align-items: center; height: 33px; padding: 0 10px; background: rgba(255,255,255,.82); color: #333; font: 23.800px "Liberation Sans", sans-serif; white-space: pre; }
.flag { width: 24px; height: 16px; margin-right: 5px; }
.attrib-link { color: #0078a8; }

.job-title { margin: 40px 0 1px; font-size: 46px; line-height: 60px; font-weight: 700; letter-spacing: -1.4px; color: #1d70b8; }
.job-title a { text-decoration: underline; text-underline-offset: 5px; text-decoration-thickness: 3px; }
.job-org { margin: 0; font-size: 36px; line-height: 50px; letter-spacing: -.6px; }
.job-meta { margin: 39px 0 0; font-size: 31px; line-height: 41px; }
.meta-row { display: flex; margin-bottom: 9px; }
.meta-row dt { width: 378px; padding-right: 30px; font-weight: 700; letter-spacing: -1.15px; flex: none; }
.meta-row dd { margin: 0; letter-spacing: -.7px; }
.job-rule { margin: 39px 0 0; border: 0; height: 2px; background: #b1b4b6; }
.job-rule + .job .job-title { margin-top: 29px; }
```
